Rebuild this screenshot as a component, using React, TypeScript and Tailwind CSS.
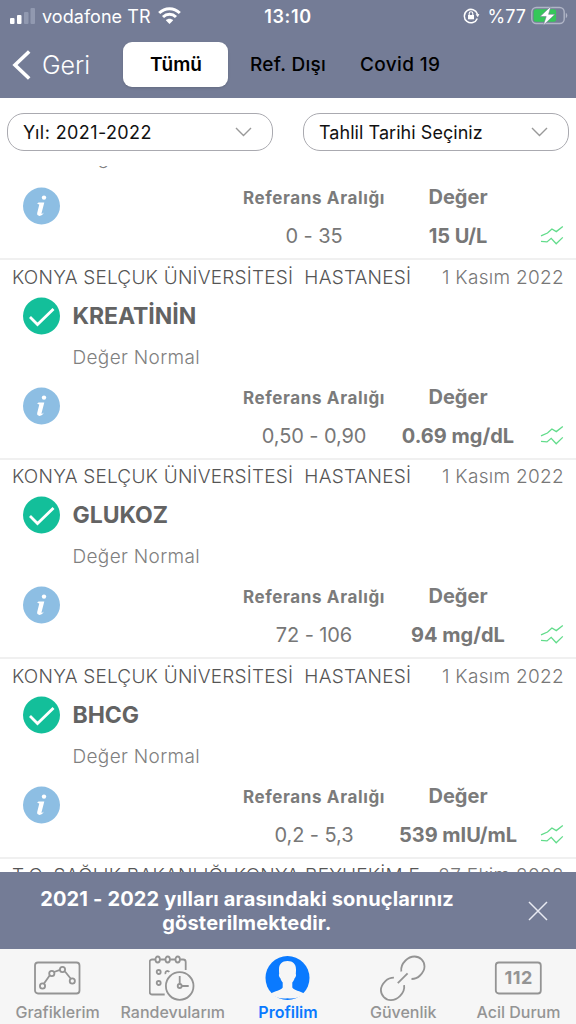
import type { ReactNode } from "react";

interface Result {
  id: number;
  name?: string;
  status?: string;
  range?: string;
  value?: string;
  hospital?: string;
  date?: string;
}

const HOSPITAL = "KONYA SELÇUK ÜNİVERSİTESİ\u00a0 HASTANESİ";

// The first and last rows are scrolled partly out of the list.
const results: Result[] = [
  { id: 1, status: "Değer Normal", range: "0 - 35", value: "15 U/L" },
  { id: 2, name: "KREATİNİN", status: "Değer Normal", range: "0,50 - 0,90", value: "0.69 mg/dL", hospital: HOSPITAL, date: "1 Kasım 2022" },
  { id: 3, name: "GLUKOZ", status: "Değer Normal", range: "72 - 106", value: "94 mg/dL", hospital: HOSPITAL, date: "1 Kasım 2022" },
  { id: 4, name: "BHCG", status: "Değer Normal", range: "0,2 - 5,3", value: "539 mIU/mL", hospital: HOSPITAL, date: "1 Kasım 2022" },
  { id: 5, hospital: "T.C. SAĞLIK BAKANLIĞI KONYA BEYHEKİM E…", date: "27 Ekim 2022" },
];

function StatusBar() {
  return (
    <div className="flex h-8 items-center justify-between pl-[10px] pr-[8px] text-white">
      <div className="flex w-[200px] items-center">
        <svg width="25" height="16" viewBox="0 0 25 16">
          <rect x="0" y="10" width="4.5" height="6" rx="1" fill="#fff" />
          <rect x="7" y="7" width="4.5" height="9" rx="1" fill="#fff" />
          <rect x="14" y="4" width="4.5" height="12" rx="1" fill="#9199b0" />
          <rect x="20.5" y="0" width="4.5" height="16" rx="1" fill="#9199b0" />
        </svg>
        <span className="ml-[7px] whitespace-nowrap text-[18px] tracking-[0.05px]">vodafone TR</span>
        <svg className="mb-[2px] ml-[7px]" width="23" height="17" viewBox="0 0 23 17" fill="none" stroke="#fff" strokeWidth="3">
          <path d="M1.2 6C7 .3 16 .3 21.8 6" />
          <path d="M5 10c3.8-3.6 9.2-3.6 13 0" />
          <path d="M11.5 17 7.8 13.2c2.2-2 5.2-2 7.4 0z" fill="#fff" stroke="none" />
        </svg>
      </div>
      <span className="-ml-[2px] text-[18px] font-semibold tracking-[0.6px]">13:10</span>
      <div className="flex w-[200px] items-center justify-end">
        <svg width="17" height="16" viewBox="0 0 17 16" fill="none" stroke="#fff" strokeWidth="1.5">
          <path d="M14.3 10.5A6.7 6.7 0 1 1 14.4 6" />
          <path d="m12.6 6.2 3.8-.2-1.6 3.3z" fill="#fff" stroke="none" />
          <rect x="5" y="7" width="6" height="4.3" fill="#fff" stroke="none" />
          <path d="M6.2 7V5.6a1.8 1.8 0 0 1 3.6 0V7" strokeWidth="1.1" />
        </svg>
        <span className="ml-[8px] text-[18px]">%77</span>
        <svg className="mb-[1px] ml-[5px]" width="37" height="20" viewBox="0 0 37 20">
          <rect x="0.8" y="1.5" width="32.4" height="16" rx="4.5" fill="none" stroke="#b0b5c6" strokeWidth="1.4" />
          <path d="M34.8 7c2 .6 2 4.4 0 5z" fill="#b0b5c6" />
          <rect x="2.6" y="3.3" width="22.5" height="12.4" rx="2.5" fill="#35c759" />
          <path d="M20 .2 9 10.600h6.200L12.200 19.400 24 8.300h-6.400z" fill="#fff" stroke="#747c96" strokeWidth="0.6" />
        </svg>
      </div>
    </div>
  );
}

function Header() {
  return (
    <header className="h-[98px] shrink-0 bg-[#747c96]">
      <StatusBar />
      <div className="flex h-[66px] items-center pl-[12px]">
        <svg width="19" height="30" viewBox="0 0 19 30" fill="none" stroke="#fff" strokeWidth="3.6">
          <path d="M17.2 1.5 3 15l14.2 13.5" />
        </svg>
        <span className="ml-[11px] w-[50px] whitespace-nowrap pt-[2px] text-[25px] font-light text-white">Geri</span>
        <div className="mb-[2px] ml-[31px] flex h-[45px] w-[105px] items-center justify-center rounded-[9px] bg-white pt-[2px] pl-[1px] text-[19px] font-semibold shadow-sm">
          Tümü
        </div>
        <span className="ml-[22px] w-[78px] whitespace-nowrap pt-[1px] text-[19px] font-medium tracking-[0.3px]">Ref. Dışı</span>
        <span className="ml-[32px] whitespace-nowrap pt-[1px] text-[19px] font-medium tracking-[0.35px]">Covid 19</span>
      </div>
    </header>
  );
}

function Select({ children }: { children: ReactNode }) {
  return (
    <div className="flex h-[38px] w-[266px] items-center justify-between rounded-[17px] border border-[#aaaab0] pl-[15px] pr-[20px] text-[18px] text-[#111]">
      <div className="whitespace-nowrap pt-[1px]">{children}</div>
      <svg width="17" height="10" viewBox="0 0 17 10" fill="none" stroke="#999" strokeWidth="1.4">
        <path d="m1 1 7.5 7.5L16 1" />
      </svg>
    </div>
  );
}

function TrendIcon() {
  return (
    <svg width="24" height="20" viewBox="0 0 24 20" fill="none" stroke="#62dc8b" strokeWidth="1.3">
      <path d="m1 10.800 6.500-2.800 4.400-4 4.400 2.600 6.500-5.200" />
      <path d="m1 16.300 6 .6 4.200-3.600 5 5.400 6.600-6.300" />
    </svg>
  );
}

function ResultRow({ result }: { result: Result }) {
  return (
    <div className="flex h-[199.5px] shrink-0 flex-col border-t-2 border-[#f0f0f0]">
      <div className="flex h-[33.5px] items-center justify-between px-[12px] pt-[2px] text-[19px] font-light">
        {result.hospital && <span className="whitespace-nowrap tracking-[0.22px] text-[#555]">{result.hospital}</span>}
        {result.date && <span className="whitespace-nowrap tracking-[0.3px] text-[#777]">{result.date}</span>}
      </div>
      {result.value && (
        <div className="flex">
          <div className="flex w-[72.5px] shrink-0 flex-col pl-[23px] pt-[3px]">
            <svg width="38" height="38" viewBox="0 0 38 38">
              <circle cx="18.5" cy="19" r="18.5" fill="#13bf9a" />
              <path d="m7 20 7.5 7.5L30.5 12" fill="none" stroke="#fff" strokeWidth="2.8" />
            </svg>
            <svg className="mt-[52px]" width="38" height="38" viewBox="0 0 38 38">
              <circle cx="18.5" cy="19" r="18.5" fill="#8dbee3" />
              <circle cx="21" cy="10.6" r="2.2" fill="#fff" />
              <path d="M15.500 15.500h5.800l-2.800 10.700c-.2 1 .8.8 2.300-.6-1 2.400-2.300 3.300-4.200 3.300-1.900 0-2.800-1-2.400-2.800l2.100-8.500-2.200-.8z" fill="#fff" />
            </svg>
          </div>
          <div className="flex flex-1 flex-col">
            <div className="mt-[4px] h-[36px] text-[23px] leading-[36px] font-bold tracking-[-0.05px] text-[#636363]">{result.name}</div>
            <span className="mt-[10px] text-[19px] leading-[28px] font-light tracking-[0.34px] text-[#808080]">{result.status}</span>
            <div className="mt-[12px] flex">
              <div className="ml-[161.5px] flex w-[160px] flex-col items-center whitespace-nowrap">
                <span className="text-[17px] leading-[29px] font-bold tracking-[0.62px] text-[#7b7b7b]">Referans Aralığı</span>
                <span className="mt-[9px] text-[20px] leading-[28px] tracking-[-0.1px] text-[#777]">{result.range}</span>
              </div>
              <div className="flex w-[128px] flex-col items-center whitespace-nowrap">
                <span className="text-[20px] leading-[27px] font-bold text-[#7b7b7b]">Değer</span>
                <span className="mt-[11px] text-[20px] leading-[28px] font-bold text-[#777]">{result.value}</span>
              </div>
              <div className="mt-[41px] ml-[18px]">
                <TrendIcon />
              </div>
            </div>
          </div>
        </div>
      )}
    </div>
  );
}

function Notice() {
  return (
    <div className="flex h-[77px] shrink-0 items-center bg-[#747c96] pl-[13px] text-white">
      <p className="w-[468px] text-center text-[20px] leading-[24px] font-bold tracking-[0.16px]">
        2021 - 2022 yılları arasındaki sonuçlarınız
        <br />
        gösterilmektedir.
      </p>
      <svg className="ml-[46.5px]" width="20" height="20" viewBox="0 0 20 20" stroke="#e8eaf2" strokeWidth="1.5">
        <path d="m1 1 18 18M19 1 1 19" />
      </svg>
    </div>
  );
}

function Tab({ label, active, children }: { label: string; active?: boolean; children: ReactNode }) {
  return (
    <div className={`flex flex-1 flex-col items-center ${active ? "text-[#0a7aff]" : "text-[#949494]"}`}>
      <svg width="48" height="48" viewBox="0.5 0 48 48" className="mt-[5px]" fill="none" stroke="currentColor" strokeWidth="1.8">
        {children}
      </svg>
      <span className={`-mt-[1px] whitespace-nowrap text-[16px] leading-[22px] ${active ? "font-semibold" : "font-medium"}`}>{label}</span>
    </div>
  );
}

function TabBar() {
  return (
    <nav className="flex h-[75px] shrink-0 bg-[#f6f6f6]">
      <Tab label="Grafiklerim">
        <rect x="1.5" y="8.5" width="44.5" height="31" rx="3" />
        <path d="m10.5 29.5 6-8.5M20.5 18l6-2.2M31.5 17.5l6 7.5" />
        <circle cx="9" cy="32" r="2.6" />
        <circle cx="18.3" cy="19.5" r="2.6" />
        <circle cx="29" cy="15.5" r="2.6" />
        <circle cx="38.8" cy="27" r="2.6" />
      </Tab>
      <Tab label="Randevularım">
        <path d="M6.700 5.500H3.700A2.500 2.500 0 0 0 1.200 8v30a2.500 2.500 0 0 0 2.500 2.500H16.200M11.700 5.500h5M21.700 5.500h5M31.700 5.500h3a2.500 2.500 0 0 1 2.500 2.500v8" />
        <ellipse cx="9.2" cy="5.5" rx="2.2" ry="3" />
        <ellipse cx="19.2" cy="5.5" rx="2.2" ry="3" />
        <ellipse cx="29.2" cy="5.5" rx="2.2" ry="3" />
        <circle cx="10.2" cy="18" r="2" />
        <path d="M17.200 20a2 2 0 1 1 3.500-2" />
        <circle cx="10.2" cy="29" r="2" />
        <circle cx="31.2" cy="32" r="13.8" />
        <circle cx="31.2" cy="32" r="2" />
        <path d="M31.2 22v8M33.2 32h7" />
      </Tab>
      <Tab label="Profilim" active>
        <circle cx="24" cy="24" r="22" fill="currentColor" stroke="none" />
        <path d="M24 7c-5.500 0-8.500 3-8.500 8.500 0 2 .1 3.200.2 4.600-.8.700 0 3.400 1.200 4.200.5 1.700 1.200 3 2.300 4.200v5c-1.500 3-8 3.500-12 6.200A22 22 0 0 0 24 44.300a22 22 0 0 0 16.800-4.600c-4-2.700-10.500-3.200-12-6.200v-5c1.100-1.200 1.800-2.500 2.300-4.200 1.200-.8 2-3.500 1.200-4.200.1-1.400.2-2.600.2-4.600C32.500 10 29.500 7 24 7z" fill="#f6f6f6" stroke="none" />
      </Tab>
      <Tab label="Güvenlik">
        <path d="M22.800 17.500c-.8-5 1.200-8 4.200-11 3-3 6-4 9-4a10 10 0 0 1 10 10c0 4-2 6.500-4.500 9s-5 3.500-8.500 3.500" />
        <path d="M22.800 17.500c-.8-5 1.200-8 4.200-11 3-3 6-4 9-4a10 10 0 0 1 10 10c0 4-2 6.500-4.500 9s-5 3.500-8.500 3.500" transform="rotate(180 24.2 24.3)" />
        <path d="m19.300 29.200 9.800-9.800" />
      </Tab>
      <Tab label="Acil Durum">
        <rect x="2.3" y="8.5" width="45" height="31" rx="3" />
        <text x="25.2" y="30" textAnchor="middle" fontSize="18" fontWeight="700" letterSpacing="0.5" fill="currentColor" stroke="none">112</text>
      </Tab>
    </nav>
  );
}

export default function App() {
  return (
    <div className="flex h-[1024px] w-[576px] flex-col overflow-hidden bg-white font-['Inter','Liberation_Sans',sans-serif] text-black">
      <Header />
      <div className="mb-[1px] flex h-[67px] shrink-0 items-center justify-between px-[7px]">
        <Select>
          <span className="tracking-[0.4px]">Yıl: 2021-2022</span>
        </Select>
        <Select>
          <span className="tracking-[0.05px]">Tahlil Tarihi Seçiniz</span>
        </Select>
      </div>
      <main className="flex min-h-0 flex-1 flex-col overflow-hidden">
        <div className="-mt-[107.3px] flex flex-col">
          {results.map((result) => (
            <ResultRow key={result.id} result={result} />
          ))}
        </div>
      </main>
      <Notice />
      <TabBar />
    </div>
  );
}
